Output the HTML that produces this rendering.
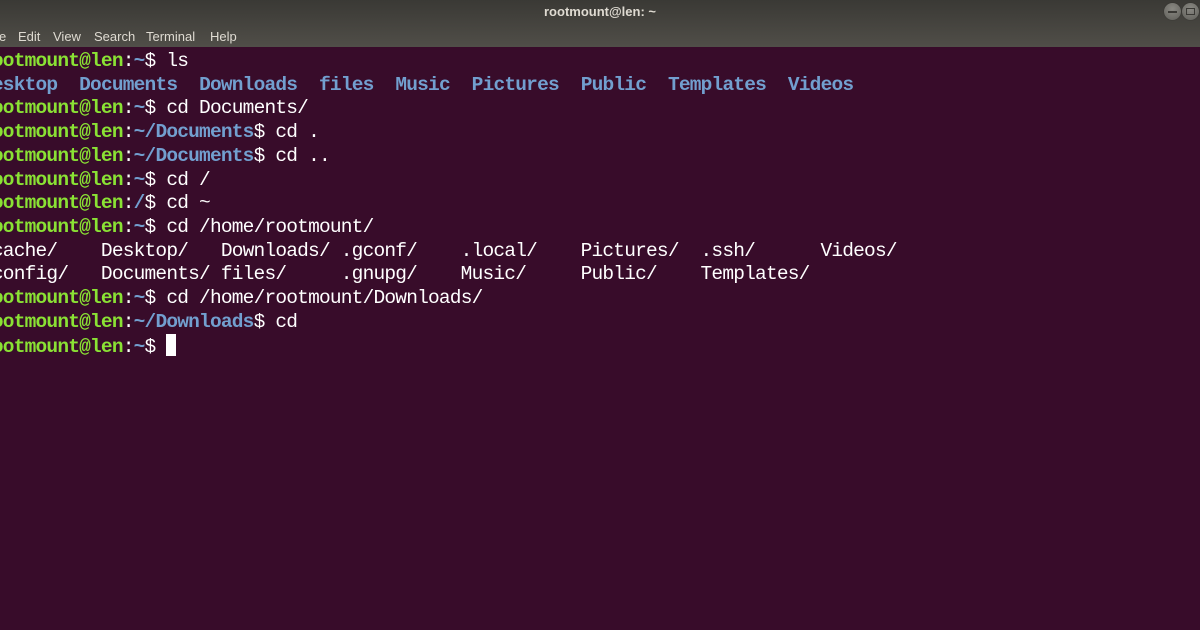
<!DOCTYPE html>
<html><head><meta charset="utf-8">
<style>
html,body{margin:0;padding:0;width:1200px;height:630px;overflow:hidden;background:#380c2a;}
#top{position:absolute;left:0;top:0;width:1200px;height:47px;background:linear-gradient(#3a3935,#504e48);}
#title{position:absolute;top:4px;left:0;width:1200px;text-align:center;font:bold 13px "Liberation Sans",sans-serif;color:#dfdbd2;}
#menu{position:absolute;top:29px;left:0;font:13px "Liberation Sans",sans-serif;color:#dfdbd2;white-space:pre;}
#menu span{position:absolute;top:0;}
.btn{position:absolute;top:3px;width:17px;height:17px;border-radius:50%;background:radial-gradient(circle at 50% 35%,#8a8983,#5f5e59);box-shadow:0 0 1px #2a2a27;}
#term{position:absolute;left:-19px;top:50px;font:19.5px "Liberation Mono",monospace;letter-spacing:-0.8px;line-height:23.7px;color:#ffffff;white-space:pre;}
.g{color:#8ae234;font-weight:bold}
.b{color:#729fcf;font-weight:bold}
.cur{display:inline-block;width:10px;height:22px;background:#fff;vertical-align:-4px;}
</style></head><body>
<div id="top">
<div id="title">rootmount@len: ~</div>
<div id="menu"><span style="left:-1px">e</span><span style="left:18px">Edit</span><span style="left:53px">View</span><span style="left:94px">Search</span><span style="left:146px">Terminal</span><span style="left:210px">Help</span></div>
<div class="btn" style="left:1164px"><div style="position:absolute;left:4px;top:8px;width:9px;height:1.5px;background:#3a3935"></div></div>
<div class="btn" style="left:1182px"><div style="position:absolute;left:4px;top:5px;width:7px;height:5px;border:1.5px solid #3a3935"></div></div>
</div>
<div id="term"><span class="g">rootmount@len</span>:<span class="b">~</span>$ ls
<span class="b">Desktop</span>  <span class="b">Documents</span>  <span class="b">Downloads</span>  <span class="b">files</span>  <span class="b">Music</span>  <span class="b">Pictures</span>  <span class="b">Public</span>  <span class="b">Templates</span>  <span class="b">Videos</span>
<span class="g">rootmount@len</span>:<span class="b">~</span>$ cd Documents/
<span class="g">rootmount@len</span>:<span class="b">~/Documents</span>$ cd .
<span class="g">rootmount@len</span>:<span class="b">~/Documents</span>$ cd ..
<span class="g">rootmount@len</span>:<span class="b">~</span>$ cd /
<span class="g">rootmount@len</span>:<span class="b">/</span>$ cd ~
<span class="g">rootmount@len</span>:<span class="b">~</span>$ cd /home/rootmount/
.cache/    Desktop/   Downloads/ .gconf/    .local/    Pictures/  .ssh/      Videos/
.config/   Documents/ files/     .gnupg/    Music/     Public/    Templates/
<span class="g">rootmount@len</span>:<span class="b">~</span>$ cd /home/rootmount/Downloads/
<span class="g">rootmount@len</span>:<span class="b">~/Downloads</span>$ cd
<span class="g">rootmount@len</span>:<span class="b">~</span>$ <span class="cur"></span></div>
</body></html>
